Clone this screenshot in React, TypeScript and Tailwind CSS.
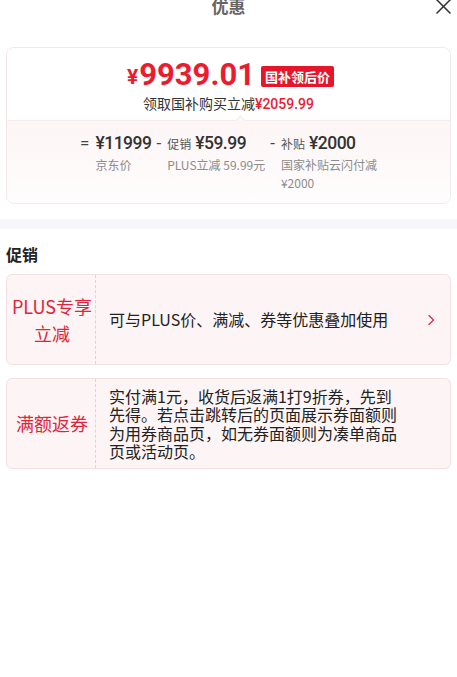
import React from "react";

const cjk = { fontFamily: '"Noto Sans CJK SC", "Noto Sans", sans-serif' };
const num = { fontFamily: 'Roboto, "Noto Sans CJK SC", sans-serif' };

interface Part {
  prefix: string;
  tag?: string;
  value: string;
  desc: string;
  descW?: string;
}

const parts: Part[] = [
  { prefix: "=", value: "¥11999", desc: "京东价" },
  { prefix: "-", tag: "促销", value: "¥59.99", desc: "PLUS立减 59.99元" },
  { prefix: "-", tag: "补贴", value: "¥2000", desc: "国家补贴云闪付减 ¥2000", descW: "w-[100px]" },
];

function PriceCard() {
  return (
    <div className="mx-[6px] mt-[35px] rounded-[8px] border border-[#f1e8ea] overflow-hidden">
      <div className="bg-white pt-[10px] pb-[6px] flex flex-col items-center">
        <div className="flex items-center h-[34px] pl-[4px]">
          <span style={num} className="text-[#ec1c2f] font-bold text-[21px] leading-[34px] mt-[4px]">¥</span>
          <span style={num} className="text-[#ec1c2f] font-bold text-[31px] leading-[34px] ml-[1px]">9939.01</span>
          <span style={cjk} className="ml-[6px] mt-[2px] bg-[#e5162b] text-white font-bold text-[13px] leading-[21px] px-[4px] rounded-[2px]">国补领后价</span>
        </div>
        <div style={cjk} className="text-[14px] leading-[20px] text-[#333] mt-[1px]">
          领取国补购买立减<span style={num} className="text-[#ec1c2f] font-medium">¥2059.99</span>
        </div>
      </div>
      <div className="relative border-t border-[#f7eced] bg-gradient-to-b from-[#fdf5f6] to-[#fffdfd] pt-[10px] pb-[11px]">
        <div className="absolute left-[230px] -top-[4px] w-[7px] h-[7px] rotate-45 bg-[#fdf5f6] border-l border-t border-[#f7eced]" />
        <div className="flex justify-center gap-[5px] pl-[4px]">
          {parts.map((p, i) => (
            <div key={i} className="flex items-start">
              <span style={num} className="text-[17px] leading-[24px] text-[#444] mr-[6px]">{p.prefix}</span>
              <div className="flex flex-col">
                <div className="flex items-baseline h-[24px]">
                  {p.tag && (
                    <span style={cjk} className="text-[12px] text-[#555] mr-[4px] leading-[24px]">{p.tag}</span>
                  )}
                  <span style={num} className="text-[17.5px] leading-[24px] font-medium tracking-[-0.5px] text-[#333]">{p.value}</span>
                </div>
                <div style={cjk} className={`text-[12px] leading-[18px] text-[#8c8c8c] mt-[1px] ${p.descW ?? ""}`}>{p.desc}</div>
              </div>
            </div>
          ))}
        </div>
      </div>
    </div>
  );
}

function Chevron() {
  return (
    <svg width="8" height="12" viewBox="0 0 8 12" fill="none">
      <path d="M2 1.5 L6.5 6 L2 10.5" stroke="#c8394d" strokeWidth="1.4" strokeLinecap="round" strokeLinejoin="round" />
    </svg>
  );
}

function PromoCard({ label, text, arrow }: { label: React.ReactNode; text: string; arrow?: boolean }) {
  return (
    <div className="mx-[6px] min-h-[91px] rounded-[6px] border border-[#f5e0e3] bg-[#fdf4f5] flex">
      <div style={cjk} className="w-[89px] shrink-0 flex items-center justify-center text-center text-[18px] leading-[27px] text-[#e0243c] border-r border-dashed border-[#f2c9cf] pl-[2px]">
        {label}
      </div>
      <div className="flex-1 flex items-center pl-[13px] pr-[14px] py-[7px]">
        <div style={cjk} className="flex-1 text-[16px] leading-[18.5px] text-[#222] pr-[24px]">{text}</div>
        <div className="w-[10px] flex justify-center">{arrow && <Chevron />}</div>
      </div>
    </div>
  );
}

export default function App() {
  return (
    <div className="w-[457px] h-[677px] bg-white overflow-hidden relative">
      <div className="relative h-[12px]">
        <div style={cjk} className="text-center text-[17px] leading-[12px] font-bold text-[#666]">优惠</div>
        <svg className="absolute left-[435px] -top-[2px]" width="17" height="17" viewBox="0 0 17 17">
          <path d="M1.5 1.5 L15.5 15.5 M15.5 1.5 L1.5 15.5" stroke="#333" strokeWidth="1.5" />
        </svg>
      </div>

      <PriceCard />

      <div className="mt-[15px] h-[10px] bg-[#f7f7fb]" />

      <div style={cjk} className="px-[6px] mt-[13px] text-[16px] leading-[24px] font-bold text-[#222]">促销</div>

      <div className="mt-[8px] flex flex-col gap-[13px]">
        <PromoCard
          label={<span>PLUS专享<br />立减</span>}
          text="可与PLUS价、满减、券等优惠叠加使用"
          arrow
        />
        <PromoCard
          label="满额返券"
          text="实付满1元，收货后返满1打9折券，先到先得。若点击跳转后的页面展示券面额则为用券商品页，如无券面额则为凑单商品页或活动页。"
        />
      </div>
    </div>
  );
}
